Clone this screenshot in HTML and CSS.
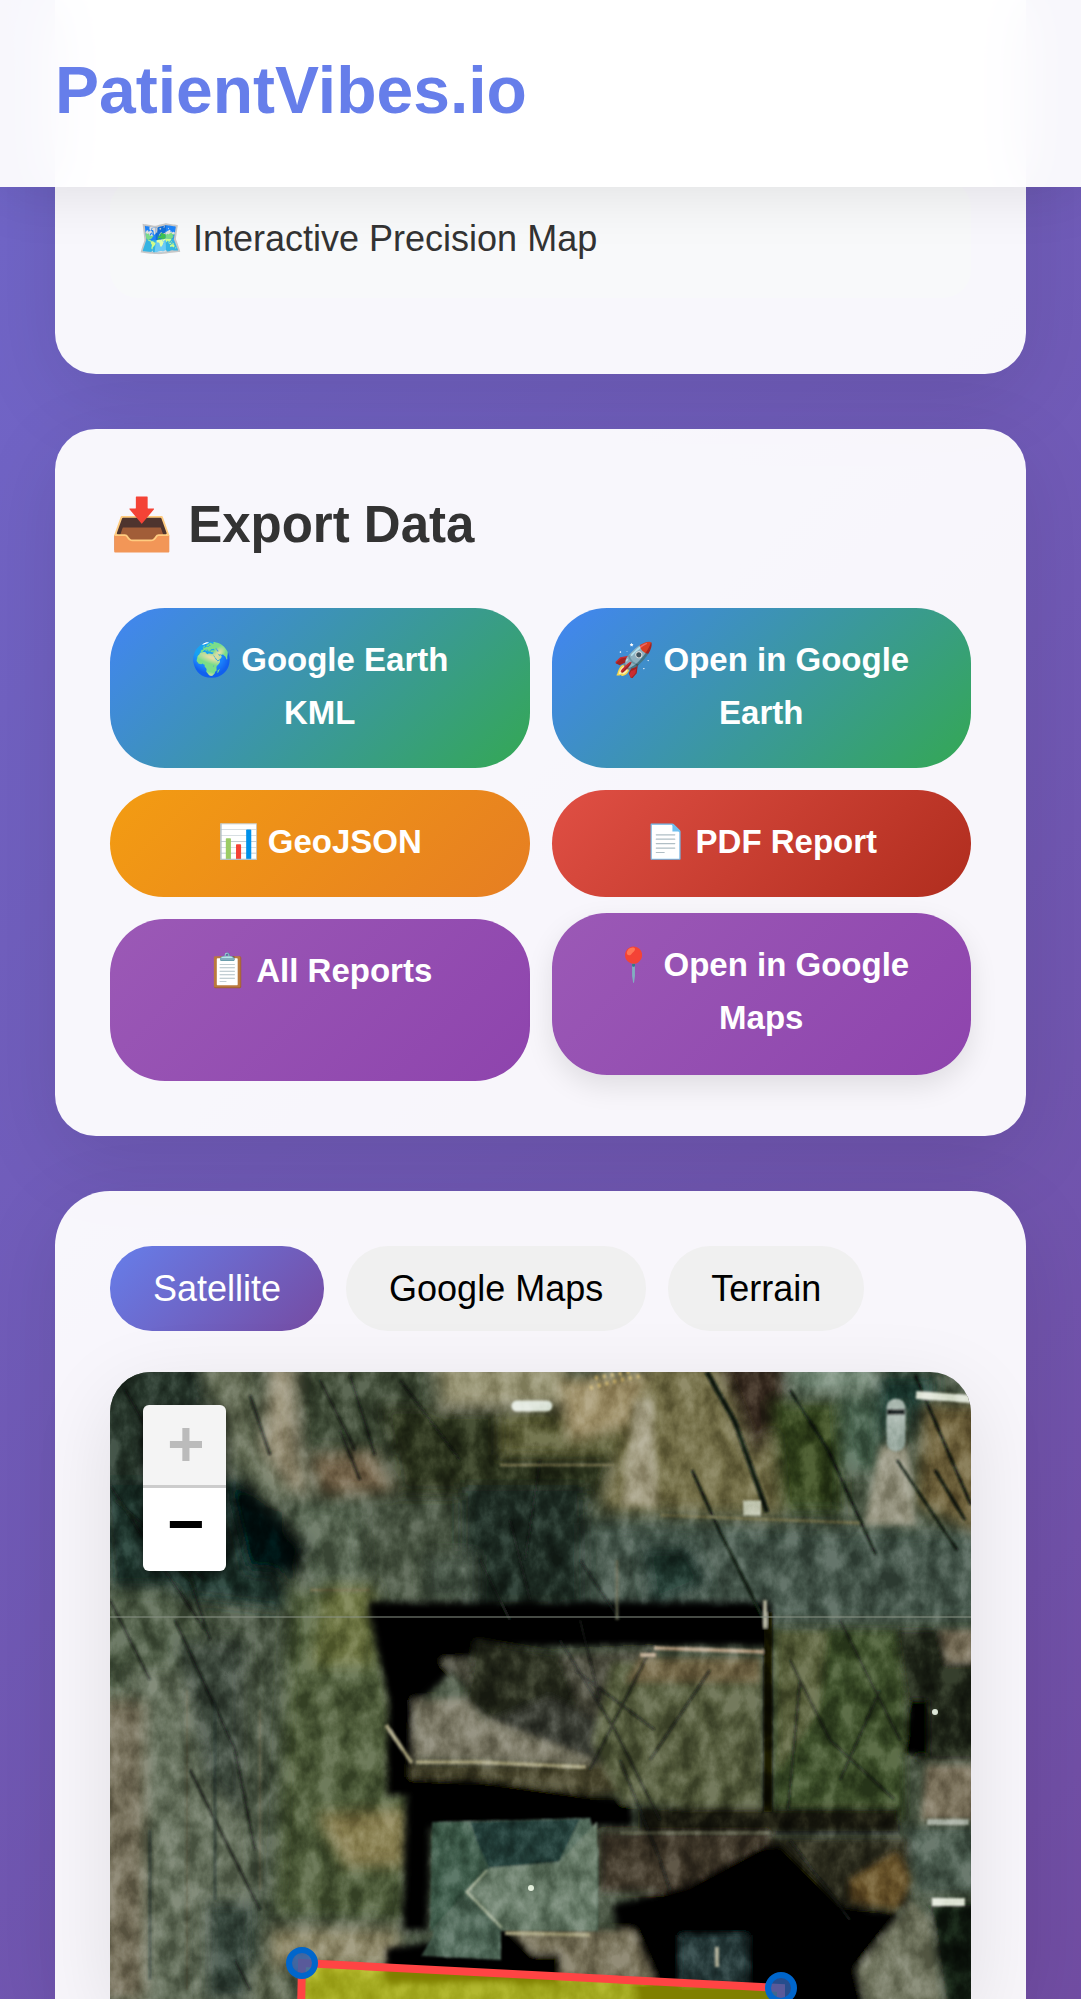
FILE: index.html
```html
<!DOCTYPE html>
<html lang="en">
<head>
<meta charset="utf-8">
<meta name="viewport" content="width=device-width, initial-scale=1">
<title>PatientVibes.io</title>
<link rel="stylesheet" href="styles.css">
</head>
<body>
<header class="header"><div class="logo">PatientVibes.io</div></header>
<main class="content">
  <section class="card card-intro">
    <div class="feature">🗺️ Interactive Precision Map</div>
  </section>

  <section class="card card-export">
    <h2 class="title">📥 Export Data</h2>
    <div class="exports">
      <a href="#kml" class="export earth">🌍 Google Earth KML</a>
      <a href="#earth" class="export earth">🚀 Open in Google Earth</a>
      <a href="#geojson" class="export geojson">📊 GeoJSON</a>
      <a href="#pdf" class="export pdf">📄 PDF Report</a>
      <a href="#reports" class="export purple">📋 All Reports</a>
      <a href="#maps" class="export purple raised">📍 Open in Google Maps</a>
    </div>
  </section>

  <section class="card card-map">
    <div class="tabs">
      <button type="button" class="tab active">Satellite</button>
      <button type="button" class="tab">Google Maps</button>
      <button type="button" class="tab">Terrain</button>
    </div>
    <div class="map">
      <svg class="imagery" viewBox="110 1372 861 627" preserveAspectRatio="xMidYMin slice" role="img" aria-label="Satellite view of the property">
        <defs>
          <filter id="soft" x="-5%" y="-5%" width="110%" height="110%"><feGaussianBlur stdDeviation="7"/></filter>
          <filter id="medium"><feGaussianBlur stdDeviation="3"/></filter>
          <filter id="crisp"><feGaussianBlur stdDeviation="1"/></filter>
          <filter id="grain" x="0" y="0" width="100%" height="100%" color-interpolation-filters="sRGB">
            <feTurbulence type="fractalNoise" baseFrequency="0.05 0.035" numOctaves="5" seed="8"/>
            <feColorMatrix values="2 0 0 0 -.48  2 0 0 0 -.48  2 0 0 0 -.48  0 0 0 0 1"/>
          </filter>
        </defs>
        <rect x="110" y="1372" width="861" height="627" fill="#465240"/>
        <g filter="url(#soft)">
          <path fill="#26352a" d="M100 1360h105v130H100z"/>
          <path fill="#626a52" d="M200 1360h55l5 90 40 45-20 5-50-40z"/>
          <path fill="#9c947c" d="M270 1360h24l4 85 14 52-24-12-26-38z"/>
          <path fill="#3c4935" d="M300 1360h130v90H300z"/>
          <path fill="#75654b" d="M308 1456l66-4 20 40-72 3z"/>
          <path fill="#2b301a" d="M380 1405h240v90H400z"/>
          <path fill="#565932" d="M500 1415h130v40H500z"/>
          <path fill="#9c9979" d="M435 1360h135l-8 45H440z"/>
          <path fill="#a1936c" d="M560 1380l90-10v50l-80 20z"/>
          <path fill="#75704a" d="M650 1360h130v155l-180-5 20-60z"/>
          <path fill="#30271a" d="M715 1360h70v50l-30 50z"/>
          <path fill="#33431f" d="M770 1400h72v112h-62z"/>
          <path fill="#7d9280" d="M790 1360h85v32h-80z"/>
          <path fill="#496350" d="M840 1395h40v75h-35z"/>
          <path fill="#1b3b32" d="M875 1375h60v80l-15 5-15-60-25 50z"/>
          <path fill="#6f633c" d="M925 1405h60v130l-70-30z"/>
          <path fill="#44564c" d="M560 1522l425 10v90H560z"/>
          <path fill="#1d2a24" d="M460 1485h125v125H460z"/>
          <path fill="#1f302c" d="M640 1545l50 0 20 40-60 25z"/>
          <path fill="#1c302c" d="M100 1480h150l40 130-180-20z"/>
          <path fill="#546350" d="M300 1500l60 5 5 85-50 5-25-60z"/>
          <path fill="#4d5b4e" d="M425 1555h50v45h-50z"/>
          <path fill="#020908" d="M226 1485l20 0 65 60-10 30-55-5z"/>
          <path fill="#4f5d47" d="M100 1590l70 0 50 60v80H100z"/>
          <path fill="#65705c" d="M125 1670h125v340H125z"/>
          <path fill="#77715b" d="M100 1700h45v300h-45z"/>
          <path fill="#3c493c" d="M175 1640h70v180l-40-40z"/>
          <path fill="#35443a" d="M205 1900h50v100h-50z"/>
          <path fill="#4f5d3a" d="M290 1590h85l35 200-5 130-130-5z"/>
          <path fill="#6b7240" d="M325 1585h48v80h-60z"/>
          <path fill="#857c4e" d="M318 1815l88-5v55h-60z"/>
          <path fill="#8d8767" d="M270 1928h130v40H270z"/>
          <path fill="#5d6650" d="M285 1965h-35v45h50z"/>
        </g>
        <g filter="url(#medium)">
          <path fill="#a39d82" d="M634 1400h18l6 106h-36z"/>
          <path fill="#969480" d="M880 1445h28l8 80h-52z"/>
          <path fill="#010201" d="M368 1602h403v44H480l-66 60v90h-28l2-95z"/>
          <path fill="#4c4c3c" d="M440 1660l215-10v140h-75l-70-60z"/>
          <path fill="#7c7966" d="M414 1700l50-2 20 20 60 15 50 20-4 12-178-4z"/>
          <path fill="#25291e" d="M475 1640l85 15 20 55-60 10-30 0-25-20z"/>
          <path fill="#383b30" d="M490 1720l60-25 60 30-15 35z"/>
          <path fill="#45432a" d="M410 1764h220v30H410z"/>
          <path fill="#030402" d="M408 1777l80 3 145 20v27H430l-2 104h-26z"/>
          <path fill="#555c3e" d="M612 1662h150v150l-140-10-30-60z"/>
          <path fill="#75694a" d="M640 1658h120v24H625z"/>
          <path fill="#3d4f2a" d="M773 1630h132v190H773z"/>
          <path fill="#555c37" d="M776 1632h52l-10 80-40 60z"/>
          <path fill="#1a2119" d="M895 1630h85v130h-65z"/>
          <path fill="#7e745f" d="M940 1630h35v32h-28zM926 1765h50v55h-55z"/>
          <path fill="#020302" d="M910 1700h18v55h-26z"/>
          <path fill="#16180f" d="M640 1807h260v26H640z"/>
          <path fill="#403829" d="M600 1832h170v60H600z"/>
          <path fill="#4c5b50" d="M905 1828h75v64h-60z"/>
          <path fill="#2b2a1b" d="M770 1838h140v70H770z"/>
          <path fill="#060605" d="M612 1905l75-20 75-40h20l60 60 70 10-5 95H640z"/>
          <path fill="#67522c" d="M850 1880l46-28 15 28-15 30-45-10z"/>
          <path fill="#71745e" d="M912 1900l18 20 12 90h-75l-10-40z"/>
          <path fill="#10150e" d="M930 1905h45v100h-28z"/>
          <path fill="#203436" d="M680 1935h68v50h-68z"/>
          <path fill="#766f58" d="M500 1930h133l22 50H560z"/>
          <path fill="#050603" d="M386 1948l45-5 78-15 25 25h27v30H386z"/>
        </g>
        <g filter="url(#crisp)">
          <path fill="#506858" d="M432 1822l158-4 8 30v83h-97v29l-80-4 12-20z"/>
          <path fill="#233d39" d="M470 1822l110-3-22 45-70 8z"/>
          <path fill="#687c69" d="M489 1868l70-6 38-40v109h-95l-36-39z"/>
          <path fill="#3d5a4a" d="M432 1822h36l21 46-23 24-36 40z"/>
        </g>
        <g fill="none" stroke="#0d1710" stroke-width="3" filter="url(#crisp)">
          <path stroke-width="5" d="M707 1372l28 50 32 90"/>
          <path d="M692 1470l26 58 45 90M790 1390l38 60 48 105M897 1460l60 90M935 1470l30 50M915 1375l56 130"/>
          <path opacity=".7" d="M110 1485l45 70 50 75M115 1500l90 80M160 1480l35 110M110 1600l40 80M175 1620l60 130 20 100M150 1540l40 40 20 60M190 1770l50 100 20 40M235 1960l15 30M125 1390l40 70M250 1395l20 60M320 1380l35 70M350 1375l25 80M400 1380l60 80M340 1430l20 50"/>
          <path opacity=".6" d="M560 1640l55 90 45 90M600 1700l-20-80M650 1650l-60 120M710 1670l-60 90M575 1670l80 60M620 1760l40 100 10 30M790 1660l40 80 65 60M840 1620l60 120M800 1680l-12 130M880 1690l-40 90M790 1840l60 80M480 1560l30 60M510 1520l20 80M580 1560l40 60M540 1460l-15 100"/>
        </g>
        <g fill="none" stroke-width="4" filter="url(#crisp)">
          <path stroke="#a9a483" d="M416 1762l60 0 110 5M505 1933l85 2M386 1725l26 38"/>
          <path stroke="#b5a086" d="M654 1648l116 4M640 1655l16 0"/>
          <path stroke="#6f6d4a" stroke-width="3" d="M500 1465h115M660 1515l200 8M310 1590h60"/>
          <path stroke="#a3af98" stroke-width="3" d="M487 1870l-20 22 35 36"/>
          <path stroke="#5f624e" stroke-width="3" d="M260 1710v180M187 1690v300M620 1833h150M617 1560v60"/>
          <path stroke="#070b05" stroke-width="9" d="M768 1612v200"/>
          <path stroke="#26362e" opacity=".6" d="M150 1830v150M215 1700v200"/>
          <path stroke="#dfe4d6" stroke-width="8" d="M916 1395l55 4M932 1902h33"/>
          <path stroke="#a9b0a4" stroke-width="6" d="M927 1822h42"/>
          <path stroke="#dfe6dc" stroke-width="11" stroke-linecap="round" d="M517 1406h30"/>
          <path stroke="#c8ccb9" stroke-width="15" d="M743 1508h18"/>
          <path stroke="#a4b3aa" stroke-width="19" stroke-linecap="round" d="M896 1408v34"/>
          <path stroke="#121e1b" stroke-width="6" d="M887 1412h18"/>
          <path stroke="#a4a48e" d="M765 1600v28M717 1947v20"/>
          <path stroke="#cbb573" stroke-dasharray="3 5" d="M590 1388l30-8 20-4M595 1378l35-6"/>
        </g>
        <circle cx="531" cy="1888" r="3" fill="#e4efdd"/><circle cx="935" cy="1712" r="3" fill="#d4dfce"/>
        <rect class="grain" x="110" y="1372" width="861" height="627" filter="url(#grain)"/>
        <path stroke="#8b9488" d="M110 1617h861"/>
        <path fill="#ffff00" fill-opacity=".5" stroke="#ff4444" stroke-width="8" d="M302 1963l479 25 0 120H299z"/>
        <g fill="#3060b0" fill-opacity=".8" stroke="#0066cc" stroke-width="6"><circle cx="302" cy="1963" r="13"/><circle cx="781" cy="1988" r="13"/></g>
      </svg>
      <div class="zoom">
        <button type="button" class="zoom-button" aria-label="Zoom in" disabled>+</button>
        <button type="button" class="zoom-button" aria-label="Zoom out">−</button>
      </div>
    </div>
  </section>
</main>
</body>
</html>
```
FILE: styles.css
```css
* { box-sizing: border-box; }

body {
  margin: 0;
  height: 100vh;
  overflow: hidden;
  display: flex;
  flex-direction: column;
  font-family: "Liberation Sans", Arial, sans-serif;
  font-size: 36px;
  line-height: 56px;
  color: #333;
  background: linear-gradient(135deg, #7067ca, #714da3);
}

button { font: inherit; border: 0; cursor: pointer; }

.header {
  position: sticky;
  top: 0;
  z-index: 2;
  flex: none;
  padding: 37px 55px 44px;
  background: rgba(255, 255, 255, .95);
  backdrop-filter: blur(28px);
  box-shadow: 0 6px 55px rgba(0, 0, 0, .1);
}

.logo {
  font-size: 66px;
  line-height: 106px;
  font-weight: bold;
  color: #667eea;
}

.content {
  flex: 1;
  min-height: 0;
  margin-top: -187px;
  padding: 0 55px;
  display: flex;
  flex-direction: column;
  gap: 55px;
}

.card {
  flex: none;
  padding: 55px;
  border-radius: 41px;
  background: rgba(255, 255, 255, .95);
  box-shadow: 0 22px 82px rgba(0, 0, 0, .1);
}

.card-intro {
  padding-top: 180px;
  padding-bottom: 76px;
  border-radius: 0 0 41px 41px;
}

.feature {
  padding: 31px 28px;
  border-radius: 28px;
  background: #f8f9fa;
}

.title {
  margin: 0 0 42px;
  font-size: 51px;
  line-height: 82px;
}

.exports {
  display: grid;
  grid-template-columns: 1fr 1fr;
  gap: 22px;
}

.export {
  padding: 25px 55px 29px;
  border-radius: 55px;
  font-size: 33px;
  font-weight: bold;
  line-height: 53px;
  text-align: center;
  text-decoration: none;
  color: #fff;
}

.earth { background: linear-gradient(135deg, #4285f4, #34a853); }
.geojson { background: linear-gradient(135deg, #f39c12, #e67e22); }
.pdf { background: linear-gradient(135deg, #e04f44, #b02d1e); }
.purple { background: linear-gradient(135deg, #9b59b6, #8e44ad); }

.raised {
  padding-bottom: 31px;
  transform: translateY(-6px);
  box-shadow: 0 11px 28px rgba(0, 0, 0, .1);
}

.card-map {
  flex: 1;
  min-height: 0;
  display: flex;
  flex-direction: column;
  gap: 41px;
  padding-bottom: 0;
  border-radius: 55px 55px 0 0;
}

.tabs { display: flex; gap: 22px; }

.tab {
  padding: 22px 43px;
  border-radius: 42px;
  line-height: 41px;
  color: #000;
  background: #f0f0f0;
}

.active {
  color: #fff;
  background: linear-gradient(135deg, #667eea, #764ba2);
}

.map {
  position: relative;
  flex: 1;
  min-height: 0;
  border-radius: 41px 41px 0 0;
  overflow: hidden;
  box-shadow: 0 22px 82px rgba(0, 0, 0, .1);
}

.imagery { display: block; width: 100%; height: 100%; }

.grain { mix-blend-mode: soft-light; opacity: .5; }

.zoom {
  position: absolute;
  top: 33px;
  left: 33px;
  width: 83px;
  display: flex;
  flex-direction: column;
  border-radius: 6px;
  overflow: hidden;
  box-shadow: 0 3px 14px rgba(0, 0, 0, .65);
}

.zoom-button {
  height: 83px;
  padding: 0 0 0 3px;
  font-family: "Liberation Mono", monospace;
  font-size: 64px;
  font-weight: bold;
  line-height: 83px;
  color: #000;
  background: #fff;
}

.zoom-button:disabled {
  padding-top: 3px;
  color: #bbb;
  background: #f4f4f4;
  border-bottom: 3px solid #ccc;
}
```
